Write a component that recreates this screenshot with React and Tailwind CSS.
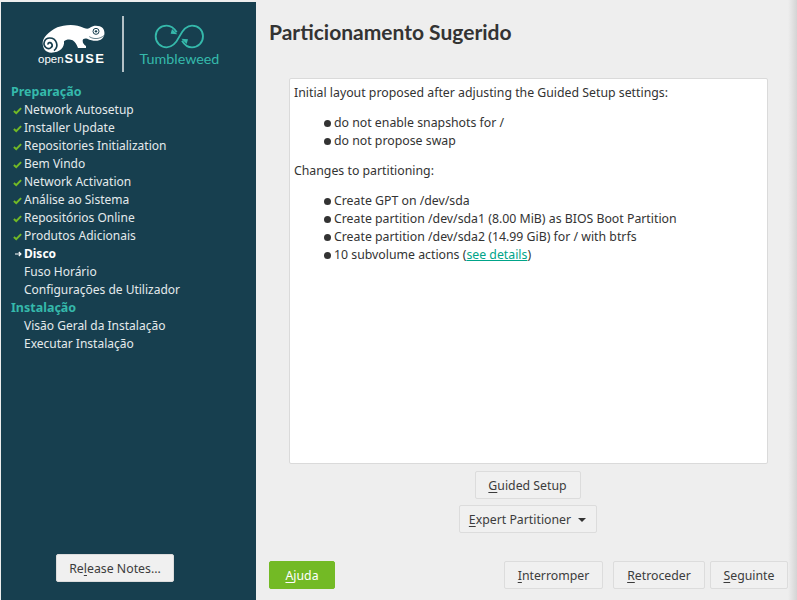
import React from 'react';

const steps = [
  { type: 'head', label: 'Preparação' },
  { type: 'done', label: 'Network Autosetup' },
  { type: 'done', label: 'Installer Update' },
  { type: 'done', label: 'Repositories Initialization' },
  { type: 'done', label: 'Bem Vindo' },
  { type: 'done', label: 'Network Activation' },
  { type: 'done', label: 'Análise ao Sistema' },
  { type: 'done', label: 'Repositórios Online' },
  { type: 'done', label: 'Produtos Adicionais' },
  { type: 'current', label: 'Disco' },
  { type: 'todo', label: 'Fuso Horário' },
  { type: 'todo', label: 'Configurações de Utilizador' },
  { type: 'head', label: 'Instalação' },
  { type: 'todo', label: 'Visão Geral da Instalação' },
  { type: 'todo', label: 'Executar Instalação' },
];

const Check = () => (
  <svg width="9" height="9" viewBox="0 0 10 10" className="shrink-0">
    <path d="M1 5.5 L3.6 8 L9 2.4" fill="none" stroke="#73ba25" strokeWidth="2.200" />
  </svg>
);

const Arrow = () => (
  <svg width="10" height="10" viewBox="0 0 10 10" className="shrink-0">
    <path d="M2 5 H8 M5.8 3 L8 5 L5.8 7" fill="none" stroke="#fff" strokeWidth="1.1" />
  </svg>
);

const Step = ({ type, label }) => {
  if (type === 'head') {
    return <div className="h-[18px] pl-[10px] text-[12.500px] font-bold leading-[18px] text-[#35b9ab]">{label}</div>;
  }
  return (
    <div className={`flex h-[18px] items-center pl-[12px] leading-[18px] ${type === 'current' ? 'font-bold text-white' : 'text-[#e4eaec]'}`}>
      <span className="flex w-[11px] shrink-0 items-center">
        {type === 'done' && <Check />}
        {type === 'current' && <Arrow />}
      </span>
      <span>{label}</span>
    </div>
  );
};

const Logo = () => (
  <div className="flex h-[81px] shrink-0">
    <div className="ml-[33px] mt-[16px] h-[48px] w-[75px]">
      <svg width="75" height="34" viewBox="0 0 225 102" className="block overflow-visible">
        <path
          d="M26 75 C26 60 42 42 70 28 C90 20 125 16 150 30 C158 33 165 33 170 28 C178 21 198 22 206 30 C214 40 213 55 204 62 C194 71 176 70 160 62 C152 60 146 62 146 68 C146 75 150 80 156 84 L156 90 L132 90 C128 80 124 72 116 67 C106 63 96 65 90 70 C92 88 78 104 52 104 C34 104 26 90 26 75 Z"
          fill="#fff"
        />
        <path
          d="M60 98 C76 86 68 60 47 60 C31 60 25 79 35 88 C45 97 59 87 53 77 C49 71 41 74 42 80"
          fill="none"
          stroke="#173f4f"
          strokeWidth="5"
        />
        <circle cx="186" cy="40" r="9" fill="none" stroke="#173f4f" strokeWidth="3" />
        <circle cx="186" cy="40" r="3.500" fill="#173f4f" />
        <path d="M166 56 C180 65 198 63 211 52" fill="none" stroke="#173f4f" strokeWidth="2" />
      </svg>
      <div className="flex h-[14px] items-baseline font-['Liberation_Sans',sans-serif] leading-[14px] text-white">
        <span className="ml-[4px] text-[11.500px]">open</span>
        <span className="ml-[1px] text-[13px] font-bold tracking-[1.300px]">SUSE</span>
      </div>
    </div>
    <div className="ml-[13px] mt-[14px] h-[56px] w-[2px] bg-[#b4c1c6]" />
    <div className="ml-[15px] mt-[21px] flex w-[81px] flex-col items-center">
      <svg width="51" height="27" viewBox="12 15 153 81" className="block">
        <path
          d="M80 43 C72 30 62 23 50 23 C31 23 17 36 17 55 C17 74 31 88 50 88 C68 88 78 76 88 56 C98 36 108 23 126 23 C145 23 159 36 159 55 C159 74 145 88 126 88 C114 88 104 81 96 68"
          fill="none"
          stroke="#35b9ab"
          strokeWidth="5.500"
        />
        <path d="M66 33 L82 49 L62 47 Z M110 78 L94 62 L114 64 Z" fill="#35b9ab" />
      </svg>
      <div className="font-['Lato',sans-serif] text-[14.300px] leading-[18px] text-[#35b9ab]">Tumbleweed</div>
    </div>
  </div>
);

const Btn = ({ className = '', children }) => (
  <button className={`flex h-[28px] items-center justify-center rounded-[2px] border pt-[2px] ${className}`}>
    {children}
  </button>
);

const greyBtn = 'border-[#dcdcdc] bg-[#f0f0f0] text-[#3c3c3c]';

const Mn = ({ children }) => <span className="underline underline-offset-2">{children}</span>;

const Bullet = ({ children }) => (
  <li className="flex items-center gap-[3px]">
    <i className="size-[7px] rounded-full bg-[#333]" />
    <span>{children}</span>
  </li>
);

export default function App() {
  return (
    <div className="flex h-[600px] w-[797px] overflow-hidden bg-[#eeeeee] font-['Noto_Sans',sans-serif] text-[12.300px] text-[#333]">
      <aside className="mt-[2px] ml-[1px] flex w-[255px] shrink-0 flex-col bg-[#173f4f] pb-[18px] text-[12px]">
        <Logo />
        <nav>
          {steps.map(s => (
            <Step key={s.label} {...s} />
          ))}
        </nav>
        <div className="mt-auto pl-[55px] text-[12.300px]">
          <Btn className={`w-[118px] ${greyBtn}`}>Re<Mn>l</Mn>ease Notes...</Btn>
        </div>
      </aside>

      <main className="flex min-w-0 flex-1 flex-col pb-[11px] pl-[13px]">
        <h1 className="mt-[17px] h-[30px] font-['Lato',sans-serif] text-[21px] font-bold leading-[30px] text-[#333]">Particionamento Sugerido</h1>
        <div className="mx-[20px] mt-[31px] flex min-h-0 flex-1 flex-col">
          <div className="flex-1 rounded-[2px] border border-[#dadada] bg-white px-[4px] pt-[5px] leading-[18px]">
            <p>Initial layout proposed after adjusting the Guided Setup settings:</p>
            <ul className="my-[12px] pl-[30px]">
              <Bullet>do not enable snapshots for /</Bullet>
              <Bullet>do not propose swap</Bullet>
            </ul>
            <p>Changes to partitioning:</p>
            <ul className="my-[12px] pl-[30px]">
              <Bullet>Create GPT on /dev/sda</Bullet>
              <Bullet>Create partition /dev/sda1 (8.00 MiB) as BIOS Boot Partition</Bullet>
              <Bullet>Create partition /dev/sda2 (14.99 GiB) for / with btrfs</Bullet>
              <Bullet>10 subvolume actions (<a className="text-[#00a489] underline">see details</a>)</Bullet>
            </ul>
          </div>
          <div className="mt-[7px] flex flex-col items-center gap-[6px] pr-[2px]">
            <Btn className={`w-[106px] ${greyBtn}`}><Mn>G</Mn>uided Setup</Btn>
            <Btn className={`w-[138px] gap-[7px] ${greyBtn}`}>
              <span><Mn>E</Mn>xpert Partitioner</span>
              <i className="h-0 w-0 border-x-[4px] border-t-[4px] border-x-transparent border-t-[#333]" />
            </Btn>
          </div>
        </div>
        <div className="mt-[28px] flex">
          <Btn className="w-[66px] border-[#73ba25] bg-[#73ba25] text-white"><Mn>A</Mn>juda</Btn>
          <Btn className={`ml-auto w-[99px] ${greyBtn}`}><Mn>I</Mn>nterromper</Btn>
          <Btn className={`ml-[10px] w-[92px] ${greyBtn}`}><Mn>R</Mn>etroceder</Btn>
          <Btn className={`ml-[5px] w-[78px] ${greyBtn}`}><Mn>S</Mn>eguinte</Btn>
        </div>
      </main>
      <div className="w-[9px] shrink-0 bg-gradient-to-r from-[#eeeeee] to-[#d4d4d4]" />
    </div>
  );
}
